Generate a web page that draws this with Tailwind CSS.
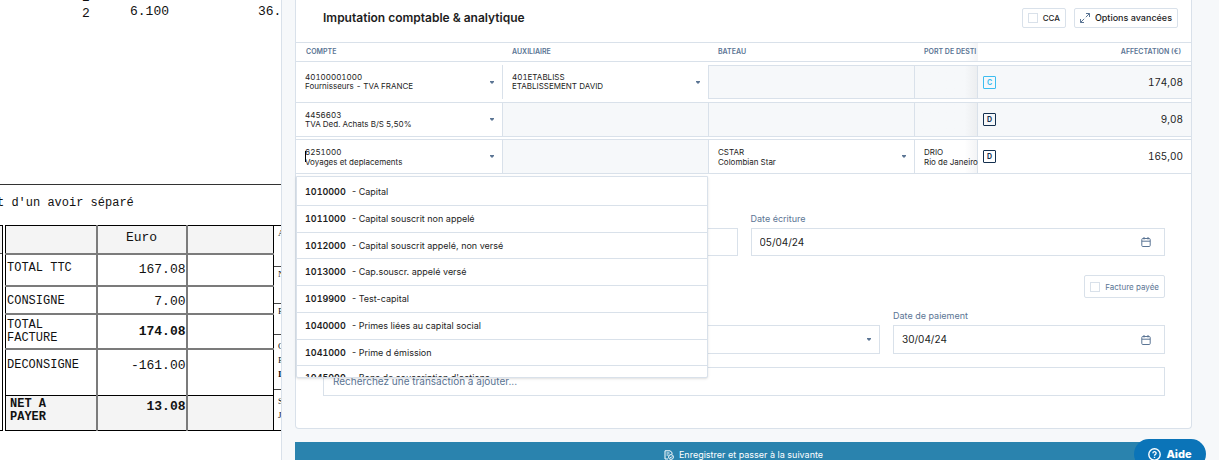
<!DOCTYPE html>
<html lang="fr">
<head>
  <meta charset="UTF-8" />
  <meta name="viewport" content="width=device-width, initial-scale=1.0" />
  <title>Imputation comptable</title>
  <script src="https://cdn.jsdelivr.net/npm/@tailwindcss/browser@4"></script>
</head>
<body class="flex h-screen overflow-hidden bg-[#f6f8fa] font-['Inter','Liberation_Sans',sans-serif] text-[#1d1d1d]">

  <!-- Scanned invoice -->
  <section class="w-[282px] shrink-0 overflow-hidden border-r border-[#d9e1ea] bg-white font-['Liberation_Mono','Courier_New',monospace] text-[#111]">
    <div class="flex h-[184px] text-[13px] leading-4">
      <div class="w-[82px] shrink-0"></div>
      <div class="-mt-[10px] w-12 shrink-0">2<br />2</div>
      <div class="mt-1 w-32 shrink-0">6.100</div>
      <div class="mt-1">36.</div>
    </div>
    <p class="-ml-[3px] h-[41px] border-t border-[#333] pt-[10px] text-[12px] leading-4 whitespace-pre">t d'un avoir séparé</p>
    <div class="flex">
      <div class="w-[3px] shrink-0 border-y border-r border-black"><div class="h-7 border-b border-[#555] bg-[#f4f4f4]"></div></div>
      <table class="ml-[2px] w-[269px] shrink-0 table-fixed border-collapse border border-black text-[12px] leading-[13px]">
        <colgroup>
          <col class="w-[91px]" />
          <col class="w-[90px]" />
          <col />
        </colgroup>
        <tbody>
          <tr class="h-7 bg-[#f4f4f4] text-[13px]">
            <td class="border-r-2 border-b-2 border-[#7b7b7b]"></td>
            <th class="border-r-2 border-b-2 border-[#7b7b7b] pb-1 font-normal">Euro</th>
            <td class="border-b-2 border-[#7b7b7b]"></td>
          </tr>
          <tr class="h-8">
            <th class="border-r-2 border-b-2 border-[#7b7b7b] pb-[2px] pl-px text-left font-normal">TOTAL TTC</th>
            <td class="border-r-2 border-b-2 border-[#7b7b7b] text-right text-[13px]">167.08</td>
            <td class="border-b-2 border-[#7b7b7b]"></td>
          </tr>
          <tr class="h-7">
            <th class="border-r-2 border-b-2 border-[#7b7b7b] pt-[3px] pl-px text-left font-normal">CONSIGNE</th>
            <td class="border-r-2 border-b-2 border-[#7b7b7b] pt-[3px] text-right text-[13px]">7.00</td>
            <td class="border-b-2 border-[#7b7b7b]"></td>
          </tr>
          <tr class="h-[35px]">
            <th class="border-r-2 border-b-2 border-[#7b7b7b] pt-[2px] pl-px text-left font-normal">TOTAL<br />FACTURE</th>
            <td class="border-r-2 border-b-2 border-[#7b7b7b] text-right text-[13px] font-bold">174.08</td>
            <td class="border-b-2 border-[#7b7b7b]"></td>
          </tr>
          <tr class="h-[47px]">
            <th class="border-r-2 border-b border-[#7b7b7b] border-b-black pb-[14px] pl-px text-left font-normal">DECONSIGNE</th>
            <td class="border-r-2 border-b border-[#7b7b7b] border-b-black pb-[14px] text-right text-[13px]">-161.00</td>
            <td class="border-b border-black"></td>
          </tr>
          <tr class="h-[35px] bg-[#f4f4f4] font-bold">
            <th class="border-r-2 border-[#7b7b7b] pb-1 pl-1 text-left">NET A<br />PAYER</th>
            <td class="border-r-2 border-[#7b7b7b] pb-[14px] text-right text-[13px]">13.08</td>
            <td></td>
          </tr>
        </tbody>
      </table>
      <div class="flex min-w-0 grow flex-col border-y border-black font-['Liberation_Serif',serif] text-[9px] leading-[14px]">
        <div class="h-[41px] border-b border-[#444] pl-1">A</div>
        <div class="h-[37px] border-b border-[#444] pl-1">N</div>
        <div class="h-[31px] border-b border-[#444] pl-1">F</div>
        <div class="h-[55px] border-b border-[#444] pt-1 pl-1">C<br />E<br /><b>I</b></div>
        <div class="pt-1 pl-1">S<br />J</div>
      </div>
    </div>
  </section>

  <!-- Entry form -->
  <main class="flex min-w-0 grow flex-col pr-[27px] pl-[13px]">
    <div class="relative h-[429px] shrink-0 rounded-b-sm border border-t-0 border-[#d9e1ea] bg-white">
      <header class="flex h-[42px] items-center gap-2 pr-[13px] pb-[6px] pl-[27px]">
        <h1 class="grow text-[12px] font-semibold">Imputation comptable &amp; analytique</h1>
        <label class="flex h-5 items-center gap-[5px] rounded-xs border border-[#d9e1ea] px-[5px] text-[8px] font-medium">
          <input type="checkbox" class="size-[10px] appearance-none border border-[#d9e1ea]" />
          CCA
        </label>
        <button type="button" class="flex h-5 items-center gap-[5px] rounded-xs border border-[#d9e1ea] px-[5px] text-[9px] font-medium">
          <svg class="size-[10px]" viewBox="0 0 10 10" fill="none" stroke="#5b7594" stroke-width="1"><path d="M6 .5h3.500V4M9.500.5 5.800 4.200M.5 6v3.500H4M.5 9.500l3.700-3.700" /></svg>
          Options avancées
        </button>
      </header>

      <table class="w-full table-fixed border-separate border-spacing-0 text-left">
        <colgroup>
          <col class="w-[207px]" />
          <col class="w-[206px]" />
          <col class="w-[206px]" />
          <col class="w-[63px]" />
          <col />
        </colgroup>
        <thead>
          <tr class="h-5 text-[7px] leading-[8px] text-[#5b7594]">
            <th class="border-y border-[#d9e1ea] pl-[10px] font-semibold">COMPTE</th>
            <th class="border-y border-[#d9e1ea] pl-[9px] font-semibold">AUXILIAIRE</th>
            <th class="border-y border-[#d9e1ea] pl-[9px] font-semibold">BATEAU</th>
            <th class="border-y border-[#d9e1ea] bg-linear-to-l from-[#f3f4f6] to-white to-20% pl-[9px] font-semibold whitespace-nowrap">PORT DE DESTI</th>
            <th class="border-y border-[#d9e1ea] pr-[10px] text-right font-semibold">AFFECTATION (€)</th>
          </tr>
        </thead>
        <tbody class="text-[8px] leading-[9px] tabular-nums">
          <tr class="h-[3px]"><td colspan="5"></td></tr>
          <tr class="h-[34px]">
            <td class="border-r border-[#d9e1ea]">
              <button type="button" aria-haspopup="listbox" class="flex w-full items-center justify-between pr-2 pl-[9px] text-left">
                <span>40100001000<br />Fournisseurs - TVA FRANCE</span>
                <svg class="h-[3px] w-1" viewBox="0 0 4 3" fill="#5b7594"><path d="M0 0h4v1L2 3 0 1z" /></svg>
              </button>
            </td>
            <td class="border-r border-[#d9e1ea]">
              <button type="button" aria-haspopup="listbox" class="flex w-full items-center justify-between pr-2 pl-[9px] text-left">
                <span>401ETABLISS<br />ETABLISSEMENT DAVID</span>
                <svg class="h-[3px] w-1" viewBox="0 0 4 3" fill="#5b7594"><path d="M0 0h4v1L2 3 0 1z" /></svg>
              </button>
            </td>
            <td class="border-y border-r border-[#d9e1ea] bg-[#f6f8fa]"></td>
            <td class="border-y border-r border-[#d9e1ea] bg-linear-to-l from-[#eceef0] to-[#f6f8fa] to-20%"></td>
            <td class="border-y border-[#d9e1ea] bg-[#f6f8fa] pr-2 pl-[5px]">
              <div class="flex items-center justify-between text-[10px]"><span class="flex size-[13px] items-center justify-center rounded-[1px] border border-[#3dbdf0] text-[7px] font-bold text-[#3dbdf0]">C</span>174,08</div>
            </td>
          </tr>
          <tr class="h-[3px]"><td colspan="5"></td></tr>
          <tr class="h-[35px]">
            <td class="border-y border-r border-[#d9e1ea]">
              <button type="button" aria-haspopup="listbox" class="flex w-full items-center justify-between pr-2 pl-[9px] text-left">
                <span>4456603<br />TVA Ded. Achats B/S 5,50%</span>
                <svg class="h-[3px] w-1" viewBox="0 0 4 3" fill="#5b7594"><path d="M0 0h4v1L2 3 0 1z" /></svg>
              </button>
            </td>
            <td class="border-y border-r border-[#d9e1ea] bg-[#f6f8fa]"></td>
            <td class="border-y border-r border-[#d9e1ea] bg-[#f6f8fa]"></td>
            <td class="border-y border-r border-[#d9e1ea] bg-linear-to-l from-[#eceef0] to-[#f6f8fa] to-20%"></td>
            <td class="border-y border-[#d9e1ea] bg-[#f6f8fa] pr-2 pl-[5px]">
              <div class="flex items-center justify-between text-[10px]"><span class="flex size-[13px] items-center justify-center rounded-[1px] border border-[#14304f] text-[7px] font-bold text-[#14304f]">D</span>9,08</div>
            </td>
          </tr>
          <tr class="h-[2px]"><td colspan="5"></td></tr>
          <tr class="h-[35px]">
            <td class="border-y border-r border-[#d9e1ea]">
              <button type="button" aria-haspopup="listbox" aria-expanded="true" class="relative flex w-full items-center justify-between pr-2 pl-[9px] text-left leading-[10px]">
                <span>6251000<br />Voyages et deplacements</span>
                <span class="absolute top-1 left-[9px] h-[11px] w-px bg-black"></span>
                <svg class="h-[3px] w-1" viewBox="0 0 4 3" fill="#5b7594"><path d="M0 0h4v1L2 3 0 1z" /></svg>
              </button>
            </td>
            <td class="border-y border-r border-[#d9e1ea] bg-[#f6f8fa]"></td>
            <td class="border-y border-r border-[#d9e1ea]">
              <button type="button" aria-haspopup="listbox" class="flex w-full items-center justify-between pr-2 pl-[9px] text-left leading-[10px]">
                <span>CSTAR<br />Colombian Star</span>
                <svg class="h-[3px] w-1" viewBox="0 0 4 3" fill="#5b7594"><path d="M0 0h4v1L2 3 0 1z" /></svg>
              </button>
            </td>
            <td class="border-y border-r border-[#d9e1ea] bg-linear-to-l from-[#f3f4f6] to-white to-20% pl-[9px] leading-[10px] whitespace-nowrap">DRIO<br />Rio de Janeiro</td>
            <td class="border-y border-[#d9e1ea] pr-2 pl-[5px]">
              <div class="flex items-center justify-between text-[10px]"><span class="flex size-[13px] items-center justify-center rounded-[1px] border border-[#14304f] text-[7px] font-bold text-[#14304f]">D</span>165,00</div>
            </td>
          </tr>
        </tbody>
      </table>

      <!-- Account suggestions -->
      <div class="absolute top-[176px] left-0 h-[202px] w-[412px] overflow-hidden rounded-b-xs border border-[#d9e1ea] bg-white shadow">
        <ul role="listbox" class="flex h-[220px] flex-col pt-[2px] text-[9px]">
          <li role="option" class="flex flex-1 items-center gap-[5px] border-b border-[#d9e1ea] pl-2"><b class="w-[42px] font-semibold tabular-nums">1010000</b><span>- Capital</span></li>
          <li role="option" class="flex flex-1 items-center gap-[5px] border-b border-[#d9e1ea] pl-2"><b class="w-[42px] font-semibold tabular-nums">1011000</b><span>- Capital souscrit non appelé</span></li>
          <li role="option" class="flex flex-1 items-center gap-[5px] border-b border-[#d9e1ea] pl-2"><b class="w-[42px] font-semibold tabular-nums">1012000</b><span>- Capital souscrit appelé, non versé</span></li>
          <li role="option" class="flex flex-1 items-center gap-[5px] border-b border-[#d9e1ea] pl-2"><b class="w-[42px] font-semibold tabular-nums">1013000</b><span>- Cap.souscr. appelé versé</span></li>
          <li role="option" class="flex flex-1 items-center gap-[5px] border-b border-[#d9e1ea] pl-2"><b class="w-[42px] font-semibold tabular-nums">1019900</b><span>- Test-capital</span></li>
          <li role="option" class="flex flex-1 items-center gap-[5px] border-b border-[#d9e1ea] pl-2"><b class="w-[42px] font-semibold tabular-nums">1040000</b><span>- Primes liées au capital social</span></li>
          <li role="option" class="flex flex-1 items-center gap-[5px] border-b border-[#d9e1ea] pl-2"><b class="w-[42px] font-semibold tabular-nums">1041000</b><span>- Prime d émission</span></li>
          <li role="option" class="flex flex-1 items-start gap-[5px] pt-[5px] pl-2"><b class="w-[42px] font-semibold tabular-nums">1045000</b><span>- Bons de souscription d'actions</span></li>
        </ul>
      </div>

      <form class="pt-[39px] pr-[26px] pl-[27px] text-[10px]">
        <div class="grid grid-cols-2 items-end gap-x-[13px]">
          <input type="text" aria-label="Libellé" class="h-7 w-full border border-[#d9e1ea] px-2" />
          <div>
            <label for="ecriture" class="block h-[15px] text-[9px] leading-3 text-[#5b7594]">Date écriture</label>
            <div class="flex h-7 items-center border border-[#d9e1ea] pr-[13px] pl-2">
              <input id="ecriture" type="text" value="05/04/24" class="min-w-0 grow outline-none" />
              <svg class="size-[10px]" viewBox="0 0 10 10" fill="none" stroke="#5b7594" stroke-width="1"><rect x=".8" y="1.500" width="8.400" height="8" rx="1" /><path d="M.8 4.200h8.400M3 0v2.500M7 0v2.500" /></svg>
            </div>
          </div>
        </div>
        <div class="mt-[19px] flex justify-end">
          <label class="flex h-[23px] items-center gap-[5px] rounded-xs border border-[#d9e1ea] px-[5px] text-[8px] text-[#5b7594]">
            <input type="checkbox" class="size-[10px] appearance-none border border-[#d9e1ea]" />
            Facture payée
          </label>
        </div>
        <div class="mt-3 grid grid-cols-3 items-end gap-x-[13px]">
          <input type="text" aria-label="Échéance" class="h-7 w-full border border-[#d9e1ea] px-2" />
          <div class="flex h-[29px] items-center border border-[#d9e1ea] pr-2">
            <select aria-label="Mode de paiement" class="h-full min-w-0 grow appearance-none"><option></option></select>
            <svg class="h-[3px] w-1" viewBox="0 0 4 3" fill="#5b7594"><path d="M0 0h4v1L2 3 0 1z" /></svg>
          </div>
          <div>
            <label for="paiement" class="block h-[15px] text-[9px] leading-3 text-[#5b7594]">Date de paiement</label>
            <div class="flex h-[29px] items-center border border-[#d9e1ea] pr-[13px] pl-2">
              <input id="paiement" type="text" value="30/04/24" class="min-w-0 grow outline-none" />
              <svg class="size-[10px]" viewBox="0 0 10 10" fill="none" stroke="#5b7594" stroke-width="1"><rect x=".8" y="1.500" width="8.400" height="8" rx="1" /><path d="M.8 4.200h8.400M3 0v2.500M7 0v2.500" /></svg>
            </div>
          </div>
        </div>
        <input type="search" aria-label="Transaction" placeholder="Recherchez une transaction à ajouter..." class="mt-[13px] h-[29px] w-full border border-[#d9e1ea] px-[9px] pb-[2px] placeholder:text-[#5b7594]" />
      </form>
    </div>

    <button type="button" class="mt-[13px] flex h-[26px] shrink-0 items-center justify-center gap-[5px] bg-[#2a83ae] text-[9px] text-white">
      <svg class="size-[10px]" viewBox="0 0 10 10" fill="none" stroke="currentColor" stroke-width="1"><path d="M4 9H1V.8h5L8 2.500V4M2.500 3h3M2.500 5h2" /><circle cx="7" cy="7" r="2.400" /><path d="m6 7 .8.8L8.200 6.300" /></svg>
      Enregistrer et passer à la suivante
    </button>
  </main>

  <a href="#aide" class="fixed right-[13px] -bottom-[9px] flex h-[30px] w-[72px] items-center justify-center gap-[5px] rounded-full bg-[#0b74b8] text-[11px] font-extrabold text-white">
    <svg class="size-[13px]" viewBox="0 0 13 13" fill="none" stroke="currentColor" stroke-width="1.400"><circle cx="6.500" cy="6.500" r="5.700" /><path d="M4.900 5.200a1.600 1.600 0 1 1 2.300 1.500c-.5.300-.7.500-.7 1M6.500 8.800v1.200" /></svg>
    Aide
  </a>

</body>
</html>
